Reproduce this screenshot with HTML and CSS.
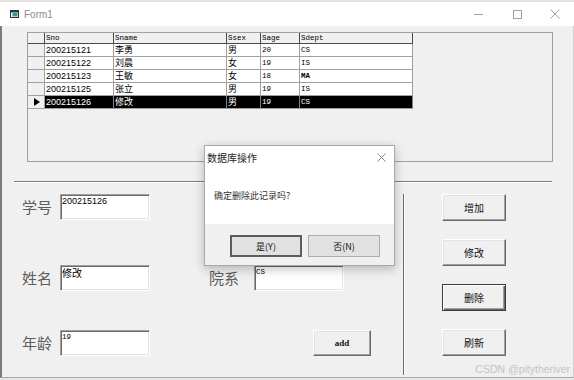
FILE: index.html
```html
<!DOCTYPE html>
<html lang="zh-CN">
<head>
    <meta charset="UTF-8">
    <title>Form1</title>
    <link rel="stylesheet" href="styles.css">
</head>
<body>
<div class="window">
    <div class="titlebar">
        <svg class="app-icon" width="9" height="8" viewBox="0 0 9 8">
            <rect x="0.5" y="0.5" width="8" height="7" fill="#fff" stroke="#333"/>
            <rect x="1" y="1" width="7" height="1.5" fill="#333"/>
            <rect x="2.5" y="3" width="5" height="3.5" fill="#2a9d9d"/>
        </svg>
        <span class="title">Form1</span>
        <div class="caption-btns">
            <span class="caption-btn"><svg width="10" height="10"><line x1="0" y1="5.5" x2="9" y2="5.5" stroke="#a0a0a0"/></svg></span>
            <span class="caption-btn"><svg width="10" height="10"><rect x="1.5" y="1.5" width="8" height="8" fill="none" stroke="#a0a0a0"/></svg></span>
            <span class="caption-btn"><svg width="10" height="10"><path d="M0.5 0.5L9.5 9.5M9.5 0.5L0.5 9.5" stroke="#a0a0a0"/></svg></span>
        </div>
    </div>

    <div class="client">
        <div class="grid-frame">
            <div class="grid">
                <div class="cell hcell"></div>
                <div class="cell hcell">Sno</div>
                <div class="cell hcell">Sname</div>
                <div class="cell hcell">Ssex</div>
                <div class="cell hcell">Sage</div>
                <div class="cell hcell">Sdept</div>

                <div class="cell ind"></div>
                <div class="cell num">200215121</div>
                <div class="cell cjk">李勇</div>
                <div class="cell cjk">男</div>
                <div class="cell mono">20</div>
                <div class="cell mono">CS</div>

                <div class="cell ind"></div>
                <div class="cell num">200215122</div>
                <div class="cell cjk">刘晨</div>
                <div class="cell cjk">女</div>
                <div class="cell mono">19</div>
                <div class="cell mono">IS</div>

                <div class="cell ind"></div>
                <div class="cell num">200215123</div>
                <div class="cell cjk">王敏</div>
                <div class="cell cjk">女</div>
                <div class="cell mono">18</div>
                <div class="cell mono bold">MA</div>

                <div class="cell ind"></div>
                <div class="cell num">200215125</div>
                <div class="cell cjk">张立</div>
                <div class="cell cjk">男</div>
                <div class="cell mono">19</div>
                <div class="cell mono">IS</div>

                <div class="cell ind"><span class="pointer"></span></div>
                <div class="cell num sel">200215126</div>
                <div class="cell cjk sel">修改</div>
                <div class="cell cjk sel">男</div>
                <div class="cell mono sel">19</div>
                <div class="cell mono sel">CS</div>
            </div>
        </div>

        <div class="separator"></div>

        <div class="lower">
            <div class="fields">
                <div class="field-row">
                    <span class="label">学号</span>
                    <div class="textbox">200215126</div>
                </div>
                <div class="field-row row2">
                    <span class="label">姓名</span>
                    <div class="textbox cjk-text">修改</div>
                    <span class="label label-dept">院系</span>
                    <div class="textbox mono-text">CS</div>
                </div>
                <div class="field-row row3">
                    <span class="label">年龄</span>
                    <div class="textbox mono-text">19</div>
                    <button class="btn add-btn">add</button>
                </div>
            </div>
            <div class="vline"></div>
            <div class="actions">
                <button class="btn">增加</button>
                <button class="btn">修改</button>
                <button class="btn btn-default">删除</button>
                <button class="btn">刷新</button>
            </div>
        </div>

        <div class="watermark">CSDN @pitytheriver</div>
    </div>

    <div class="msgbox">
        <div class="msg-title">
            <span>数据库操作</span>
            <svg class="msg-close" width="9" height="9"><path d="M0.5 0.5L8.5 8.5M8.5 0.5L0.5 8.5" stroke="#888"/></svg>
        </div>
        <div class="msg-body">确定删除此记录吗?</div>
        <div class="msg-footer">
            <button class="msg-btn msg-default">是(Y)</button>
            <button class="msg-btn">否(N)</button>
        </div>
    </div>
</div>
</body>
</html>
```

FILE: styles.css
```css
body {
    margin: 0;
    width: 574px;
    height: 380px;
    overflow: hidden;
    background-color: #e6e6e6;
    font-family: "Liberation Sans", "Noto Sans CJK SC", sans-serif;
}

.window {
    position: relative;
    width: 574px;
    height: 380px;
}

/* title bar */
.titlebar {
    height: 26px;
    box-sizing: border-box;
    border-top: 2px solid #e2e2e2;
    background-color: #fff;
    display: flex;
    align-items: center;
}

.app-icon {
    margin-left: 10px;
}

.title {
    margin-left: 5px;
    font-size: 10px;
    color: #8c8c8c;
}

.caption-btns {
    margin-left: auto;
    display: flex;
}

.caption-btn {
    width: 38px;
    height: 24px;
    display: flex;
    align-items: center;
    justify-content: center;
}

/* form area */
.client {
    position: relative;
    height: 352px;
    box-sizing: border-box;
    padding-top: 6px;
    border-left: 2px solid #7c7c7c;
    border-right: 1px solid #d0d0d0;
    border-bottom: 1px solid #a8a8a8;
    background-color: #f0f0f0;
}

.grid-frame {
    margin-left: 25px;
    width: 526px;
    height: 130px;
    box-sizing: border-box;
    border: 1px solid #a0a0a0;
}

.grid {
    display: grid;
    grid-template-columns: 17px 69px 113px 34px 39px 113px;
    grid-template-rows: 11px repeat(5, 13px);
    width: 385px;
}

.cell {
    box-sizing: border-box;
    border-right: 1px solid #a0a0a0;
    border-bottom: 1px solid #a0a0a0;
    padding-left: 1px;
    background-color: #fff;
    color: #000;
    font-size: 9px;
    line-height: 12px;
    white-space: nowrap;
}

.hcell {
    background-color: #f0f0f0;
    border-color: #4a4a4a;
    font-family: "Liberation Mono", monospace;
    font-size: 7.5px;
    line-height: 10px;
}

.ind {
    background-color: #f0f0f0;
    position: relative;
}

.num {
    font-family: "Liberation Sans", sans-serif;
}

.cjk {
    font-family: "Noto Sans CJK SC", sans-serif;
    font-size: 9px;
    line-height: 12px;
}

.mono {
    font-family: "Liberation Mono", monospace;
    font-size: 7.5px;
}

.bold {
    font-weight: bold;
}

.sel {
    background-color: #000;
    color: #fff;
    border-right-color: #808080;
}

.pointer {
    position: absolute;
    left: 6px;
    top: 2px;
    width: 0;
    height: 0;
    border-left: 6px solid #000;
    border-top: 4px solid transparent;
    border-bottom: 4px solid transparent;
}

.separator {
    margin: 19px 0 0 12px;
    width: 538px;
    height: 1px;
    background-color: #7a7a7a;
    border-bottom: 1px solid #fff;
}

/* lower part */
.lower {
    display: flex;
}

.fields {
    width: 401px;
    padding-top: 11px;
}

.field-row {
    display: flex;
    align-items: flex-start;
    height: 26px;
    padding-left: 20px;
}

.row2 {
    margin-top: 45px;
}

.row3 {
    margin-top: 39px;
}

.label {
    width: 38px;
    font-family: "Noto Sans CJK SC", sans-serif;
    font-size: 15px;
    line-height: 26px;
    color: #5c5c5c;
}

.label-dept {
    margin-left: 59px;
    width: 45px;
}

.textbox {
    width: 90px;
    height: 26px;
    box-sizing: border-box;
    padding: 1px 0 0 1px;
    background-color: #fff;
    border-top: 1px solid #a0a0a0;
    border-left: 1px solid #a0a0a0;
    border-right: 1px solid #fff;
    border-bottom: 1px solid #fff;
    box-shadow: inset 1px 1px 0 #696969, inset -1px -1px 0 #e3e3e3;
    font-size: 9px;
    line-height: 10px;
}

.cjk-text {
    font-family: "Noto Sans CJK SC", sans-serif;
    font-size: 10px;
    line-height: 12px;
}

.mono-text {
    font-family: "Liberation Mono", monospace;
    font-size: 7.5px;
}

.btn {
    width: 64px;
    height: 27px;
    box-sizing: border-box;
    padding: 0;
    background-color: #f0f0f0;
    border: 1px solid;
    border-color: #fff #696969 #696969 #fff;
    box-shadow: inset -1px -1px 0 #a0a0a0, inset 1px 1px 0 #e3e3e3;
    font-family: "Noto Sans CJK SC", sans-serif;
    font-size: 10px;
    color: #111;
}

.btn-default {
    border: 1px solid #3a3a3a;
    box-shadow: inset 1px 1px 0 #fff, inset -1px -1px 0 #696969, inset -2px -2px 0 #a0a0a0;
}

.add-btn {
    margin-left: 163px;
    width: 58px;
    height: 26px;
    font-family: "Liberation Serif", serif;
    font-weight: bold;
    font-size: 9px;
}

.vline {
    margin-top: 11px;
    width: 1px;
    height: 181px;
    background-color: #6a6a6a;
    border-right: 1px solid #fff;
}

.actions {
    margin-left: 37px;
    padding-top: 11px;
    display: flex;
    flex-direction: column;
    gap: 18px;
}

.watermark {
    position: absolute;
    right: 3px;
    bottom: 2px;
    font-size: 10.5px;
    line-height: 12px;
    color: #c4c4c4;
}

/* message box */
.msgbox {
    position: absolute;
    left: 204px;
    top: 145px;
    width: 191px;
    height: 121px;
    box-sizing: border-box;
    border: 1px solid #a8a8a8;
    background-color: #fff;
    box-shadow: 0 3px 10px rgba(0, 0, 0, 0.25);
    display: flex;
    flex-direction: column;
    font-family: "Noto Sans CJK SC", sans-serif;
}

.msg-title {
    height: 22px;
    display: flex;
    align-items: center;
    padding-left: 2px;
    font-size: 10px;
    color: #222;
}

.msg-close {
    margin-left: auto;
    margin-right: 8px;
}

.msg-body {
    height: 56px;
    box-sizing: border-box;
    padding: 22px 0 0 9px;
    font-size: 9px;
    line-height: 12px;
    color: #333;
}

.msg-footer {
    flex: 1;
    display: flex;
    gap: 6px;
    padding: 11px 0 0 25px;
    background-color: #f0f0f0;
}

.msg-btn {
    width: 72px;
    height: 22px;
    box-sizing: border-box;
    padding: 0;
    border: 1px solid #adadad;
    background-color: #e1e1e1;
    font-family: "Noto Sans CJK SC", sans-serif;
    font-size: 9px;
    color: #111;
}

.msg-default {
    border: 2px solid #5c5c5c;
}
```
